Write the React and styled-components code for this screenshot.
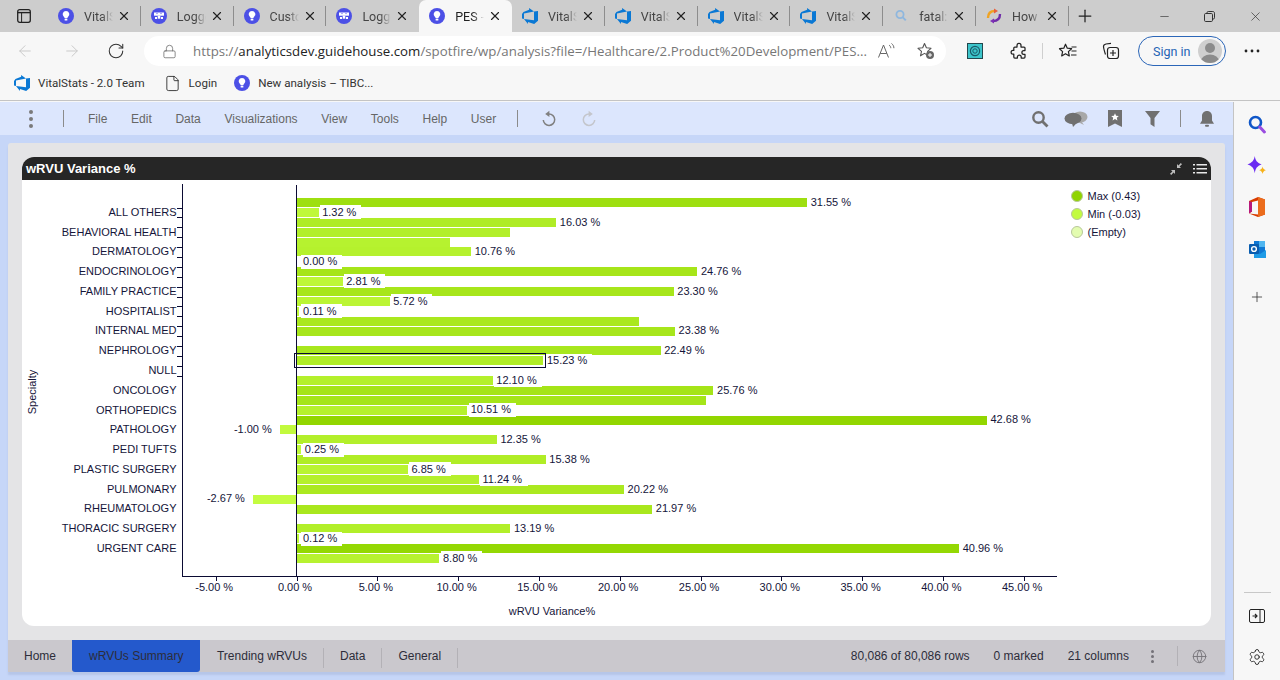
import React from "react";
import styled, { createGlobalStyle } from "styled-components";
import { ArrowLeft, ArrowRight, RotateCw, Lock, Plus, Minus, X, Settings, File as FileIcon, Globe } from "lucide-react";

const Global = createGlobalStyle`
  html, body { margin: 0; padding: 0; background: #f7f7f7; }
  #root { width: 1280px; height: 680px; overflow: hidden; }
`;

const UI = `Roboto, "Open Sans", sans-serif`;
const AR = `"Liberation Sans", Arial, sans-serif`;

const Page = styled.div`
  width: 1280px; height: 680px; display: flex; flex-direction: column; overflow: hidden;
  background: #f7f7f7; font-family: ${UI};
`;
const TabStrip = styled.div`
  height: 32px; flex: none; display: flex; align-items: stretch; background: #cdcdcd;
`;
const StripToggle = styled.div`
  width: 48px; flex: none; display: flex; align-items: center; padding-left: 17px; box-sizing: border-box;
`;
const Tab = styled.div`
  width: 92.8px; flex: none; box-sizing: border-box; position: relative;
  display: flex; align-items: center; padding-left: 10px;
  background: ${(p) => (p.$active ? "#f7f7f7" : "transparent")};
  border-radius: ${(p) => (p.$active ? "7px 7px 0 0" : "0")};
  &::after {
    content: ""; position: absolute; right: 0; top: 6px; height: 20px; width: 1px;
    background: ${(p) => (p.$active || p.$beforeActive ? "transparent" : "#8d8d8d")};
  }
`;
const TabTitle = styled.span`
  width: 29px; margin-left: 10px; overflow: hidden; white-space: nowrap; font-size: 12.5px; color: ${(p) => (p.$active ? "#222" : "#444")};
  -webkit-mask-image: linear-gradient(90deg, #000 62%, transparent 100%);
  mask-image: linear-gradient(90deg, #000 62%, transparent 100%);
`;
const TabClose = styled.span`
  display: flex; margin-left: 4px; color: #222;
`;
const NewTab = styled.div`
  width: 33px; flex: none; display: flex; align-items: center; justify-content: center; color: #222;
`;
const WindowControls = styled.div`
  margin-left: auto; display: flex; align-items: center; color: #333; padding-right: 2px;
`;
const WindowButton = styled.div`
  width: 45.5px; display: flex; justify-content: center;
`;

const AddressRow = styled.div`
  height: 34px; flex: none; display: flex; align-items: center; padding-top: 4px; box-sizing: border-box; position: relative;
`;
const NavSlot = styled.div`
  width: ${(p) => p.$w || 44}px; flex: none; display: flex; justify-content: center; color: ${(p) => (p.$dim ? "#c9c9c9" : "#333")};
`;
const AddressBar = styled.div`
  width: 802px; height: 30px; flex: none; margin-left: 6px; background: #fff; border-radius: 15px;
  display: flex; align-items: center; box-sizing: border-box; padding-left: 18px; color: #666;
`;
const Url = styled.div`
  margin-left: 16px; width: 676px; white-space: nowrap; overflow: hidden; font-family: "Open Sans", sans-serif; font-size: 13.25px; color: #777; letter-spacing: 0.02px;
  b { font-weight: 400; color: #222; }
`;
const BarIcon = styled.div`
  display: flex; flex: none; margin-left: ${(p) => p.$ml || 0}px;
`;
const Divider = styled.div`
  width: 1px; height: 16px; background: #cfcfcf; flex: none; margin-left: ${(p) => p.$ml || 0}px;
`;
const SignIn = styled.div`
  width: 88px; height: 30px; box-sizing: border-box; flex: none; margin-left: 18px; border: 1px solid #2b66b8; border-radius: 15px;
  display: flex; align-items: center; justify-content: space-between; padding: 0 3px 0 14px; font-size: 12.5px; color: #2463b4;
`;
const Avatar = styled.div`
  width: 24px; height: 24px; border-radius: 50%; background: #cfcfcf; overflow: hidden; display: flex;
`;
const BookmarkRow = styled.div`
  height: 35px; flex: none; display: flex; align-items: center; padding-left: 14px; box-sizing: border-box;
  border-bottom: 1px solid #c4c4c4; margin-bottom: 1px;
`;
const Bookmark = styled.div`
  display: flex; align-items: center; font-size: 11.6px; color: #333; margin-right: ${(p) => p.$mr}px; gap: 8px; white-space: nowrap;
`;

const Body = styled.div`
  flex: 1; min-height: 0; display: flex;
`;
const AppArea = styled.div`
  width: 1233px; flex: none; background: #c6d6f8; display: flex; flex-direction: column; font-family: ${AR}; border-right: 1px solid #c4c4c4;
`;
const Toolbar = styled.div`
  height: 33px; flex: none; background: #dce6fd; display: flex; align-items: center; box-sizing: border-box; padding-right: 18px;
`;
const MenuDots = styled.div`
  margin-left: 29px; display: flex; flex-direction: column; gap: 3px;
  i { width: 4px; height: 4px; border-radius: 50%; background: #7a7a7a; display: block; }
`;
const ToolSep = styled.div`
  width: 1px; height: ${(p) => p.$h || 17}px; background: #8b8b8b; flex: none; margin-left: ${(p) => p.$ml || 0}px;
`;
const MenuList = styled.div`
  display: flex; gap: 23.7px; margin-left: 24px; font-size: 12px; color: #666;
`;
const ToolIcon = styled.div`
  flex: none; display: flex; margin-left: ${(p) => p.$ml || 0}px;
`;
const Panel = styled.div`
  margin: 8px 0 0 8px; width: 1217px; height: 529px; flex: none; background: #e4e4e6; border-radius: 3px 3px 0 0;
  display: flex; flex-direction: column; box-shadow: 0 3px 2px #b6c6e8;
`;
const ChartCard = styled.div`
  margin: 14px; height: 469px; flex: none; display: flex; flex-direction: column; background: #fff; border-radius: 12px;
  overflow: hidden;
`;
const ChartHeader = styled.div`
  height: 23px; flex: none; background: #262626; color: #fff; display: flex; align-items: center; padding: 0 4px;
  font-size: 13px; font-weight: 700;
`;
const HeadIcons = styled.div`
  margin-left: auto; display: flex; align-items: center; gap: 11px;
`;
const ChartBody = styled.div`
  flex: 1; display: flex;
`;
const Plot = styled.svg`
  width: 1040px; height: 446px; flex: none; display: block; font-family: ${AR};
`;
const CatLabel = styled.text`
  font-size: 11px; fill: #15153a; text-anchor: end; dominant-baseline: central;
`;
const ValueLabel = styled.text`
  font-size: 11px; fill: #15153a; dominant-baseline: central; text-anchor: ${(p) => p.$anchor || "start"};
`;
const AxisLabel = styled.text`
  font-size: 11px; fill: #15153a; text-anchor: middle; dominant-baseline: central;
`;
const AxisLine = styled.line`
  stroke: #0b0b33; stroke-width: 1; shape-rendering: crispEdges;
`;
const LabelBox = styled.rect`
  fill: #fff;
`;
const MarkRect = styled.rect`
  fill: none; stroke: #0b0b33; stroke-width: 1; shape-rendering: crispEdges;
`;
const Legend = styled.div`
  margin-left: 9px; padding-top: 7px; display: flex; flex-direction: column;
`;
const LegendItem = styled.div`
  height: 18px; display: flex; align-items: center; gap: 4.5px; font-size: 11px; color: #15153a;
`;
const LegendDot = styled.span`
  width: 10px; height: 10px; border-radius: 50%; background: ${(p) => p.$c}; border: 0.5px solid #b8c79a; flex: none;
`;
const StatusBar = styled.div`
  height: 32px; flex: none; background: #cac8cd; display: flex; align-items: stretch; font-size: 12px; color: #2d2d3a;
`;
const SheetTab = styled.div`
  padding: 0 ${(p) => p.$pad || 16.5}px; display: flex; align-items: center; position: relative;
  background: ${(p) => (p.$active ? "#2459cc" : "transparent")};
  border-radius: ${(p) => (p.$active ? "0 0 3px 3px" : "0")};
  &::after {
    content: ""; position: absolute; right: 0; top: 8px; height: 20px; width: 1px;
    background: ${(p) => (p.$sep ? "#b3b1b6" : "transparent")};
  }
`;
const StatusRight = styled.div`
  margin-left: auto; display: flex; align-items: center; padding-right: 18px;
`;
const StatusText = styled.span`
  margin-right: ${(p) => p.$mr || 24}px; white-space: nowrap;
`;
const StatusDots = styled(MenuDots)`
  margin-left: 0; gap: 2px;
  i { width: 3px; height: 3px; background: #747278; }
`;
const StatusSep = styled.div`
  width: 1px; height: 20px; background: #b3b1b6; margin: 0 14px 0 23px;
`;

const Sidebar = styled.div`
  flex: 1; background: #f7f7f7; display: flex; flex-direction: column; align-items: center; padding-top: 12px; box-sizing: border-box;
`;
const SideIcon = styled.div`
  height: 20px; display: flex; align-items: center; justify-content: center; margin-bottom: ${(p) => p.$mb || 22}px;
`;
const SideRule = styled.div`
  width: 27px; height: 1px; background: #c8c8c8; margin-top: auto; margin-bottom: 13px;
`;

/* ---- icons ---- */
const Bulb = ({ s = 16 }) => (
  <svg width={s} height={s} viewBox="0 0 16 16" style={{ flex: "none" }}>
    <circle cx="8" cy="8" r="8" fill="#4c50e6" />
    <path d="M8 3a3.4 3.4 0 0 0-2 6.1c.4.3.6.7.6 1.1h2.8c0-.4.2-.8.6-1.1A3.4 3.4 0 0 0 8 3z" fill="#fff" />
    <rect x="6.6" y="10.8" width="2.8" height="1.7" rx=".6" fill="#fff" />
  </svg>
);
const Logger = () => (
  <svg width="16" height="16" viewBox="0 0 16 16" style={{ flex: "none" }}>
    <circle cx="8" cy="8" r="8" fill="#4c50e6" />
    <rect x="3" y="4.5" width="10" height="3.2" fill="#fff" />
    <path d="M5.5 5.6h1M9.5 5.6h1" stroke="#4c50e6" strokeWidth="1" />
    <rect x="6.7" y="7.7" width="2.6" height="3" fill="#fff" />
    <rect x="4" y="9" width="2" height="2" fill="#fff" />
    <rect x="10" y="9" width="2" height="2" fill="#fff" />
  </svg>
);
const Azure = ({ s = 16 }) => (
  <svg width={s} height={s} viewBox="0 0 24 24" style={{ flex: "none" }}>
    <path fill="#0a78d4" d="M0 8.877L2.247 5.91l8.405-3.416V.022l7.37 5.393L2.966 8.338v8.225L0 15.707zm24-4.45v14.651l-5.753 4.9-9.303-3.057v3.056l-5.978-7.416 15.057 1.798V5.415z" />
  </svg>
);
const SearchFav = () => (
  <svg width="16" height="16" viewBox="0 0 16 16" style={{ flex: "none" }}>
    <circle cx="7" cy="6.5" r="3.6" fill="none" stroke="#8fb7de" strokeWidth="1.8" />
    <path d="M9.8 9.4l3 3" stroke="#8fb7de" strokeWidth="2" />
  </svg>
);
const Swirl = () => (
  <svg width="16" height="16" viewBox="0 0 16 16" style={{ flex: "none" }}>
    <path d="M2 10 C2 5 5 3 9 3" fill="none" stroke="#f0a323" strokeWidth="2.4" />
    <path d="M8 .5l4 2.6-4 2.4z" fill="#e9603a" />
    <path d="M14 6c0 5-3 7-7 7" fill="none" stroke="#6f2da8" strokeWidth="2.4" />
    <path d="M8 15.5l-4-2.6 4-2.4z" fill="#7d2fb5" />
  </svg>
);
const SidebarToggle = () => (
  <svg width="14" height="14" viewBox="0 0 14 14">
    <rect x=".7" y=".7" width="12.6" height="12.6" rx="2" fill="none" stroke="#222" strokeWidth="1.3" />
    <path d="M.7 3.6h12.6" stroke="#222" strokeWidth="1.4" />
    <path d="M4.6 3.6V13" stroke="#222" strokeWidth="1" />
  </svg>
);
const ReadAloud = () => (
  <svg width="20" height="18" viewBox="0 0 20 18" fill="none" stroke="#666" strokeWidth="1">
    <path d="M1.5 15.5L6.5 3l5 12.5M3.2 11.5h6.6" />
    <path d="M12 3c1.2.8 1.8 2 1.8 3.2M14.5 1.5c1.6 1.2 2.4 2.8 2.4 4.7" />
  </svg>
);
const StarAdd = () => (
  <svg width="20" height="20" viewBox="0 0 20 20">
    <path d="M8.5 2.5l1.9 4.3 4.6.5-3.4 3 1 4.5-4.1-2.4-4 2.4 1-4.5-3.5-3 4.7-.5z" fill="none" stroke="#555" strokeWidth="1.1" strokeLinejoin="round" />
    <circle cx="14" cy="14" r="4" fill="#666" />
    <path d="M14 12v4M12 14h4" stroke="#fff" strokeWidth="1" />
  </svg>
);
const ExtIcon = () => (
  <svg width="16" height="16" viewBox="0 0 16 16">
    <rect x=".5" y=".5" width="15" height="15" fill="#3cc5cb" stroke="#23474d" />
    <circle cx="8" cy="8" r="4.6" fill="none" stroke="#1b5a68" strokeWidth="1.2" />
    <circle cx="8" cy="8" r="2.2" fill="none" stroke="#1b5a68" strokeWidth="1" />
  </svg>
);
const PuzzleIcon = () => (
  <svg width="18" height="18" viewBox="0 0 18 18" fill="none" stroke="#222" strokeWidth="1.25" strokeLinejoin="round">
    <path d="M7 3.4a2 2 0 0 1 4 0V5h3a1 1 0 0 1 1 1v2.6h-1.2a1.9 1.9 0 0 0 0 3.8H15V15a1 1 0 0 1-1 1h-2.8v-1a1.9 1.9 0 0 0-3.8 0v1H4.8a1 1 0 0 1-1-1v-2.8H3a1.9 1.9 0 0 1 0-3.8h.8V6a1 1 0 0 1 1-1H7z" />
  </svg>
);
const Favorites = () => (
  <svg width="20" height="18" viewBox="0 0 20 18" fill="none" stroke="#222" strokeWidth="1.2" strokeLinejoin="round">
    <path d="M7.5 2.2l1.8 4 4.3.5-3.2 2.9.9 4.3-3.8-2.2-3.8 2.2.9-4.3L1.5 6.7l4.3-.5z" />
    <path d="M13.5 5h5M13.5 9h5M13 13h5.5" />
  </svg>
);
const Collections = () => (
  <svg width="18" height="18" viewBox="0 0 18 18" fill="none" stroke="#222" strokeWidth="1.2">
    <path d="M3.5 12.5C2 8 1.6 6 1.5 4.5 1.5 3 2.5 2.3 4 2l5-.6" />
    <rect x="5.5" y="5.5" width="11" height="11" rx="2.5" />
    <path d="M11 8v6M8 11h6" />
  </svg>
);
const Dots3 = () => (
  <svg width="16" height="4" viewBox="0 0 16 4"><circle cx="2" cy="2" r="1.4" fill="#222" /><circle cx="8" cy="2" r="1.4" fill="#222" /><circle cx="14" cy="2" r="1.4" fill="#222" /></svg>
);
const Person = () => (
  <svg width="24" height="24" viewBox="0 0 24 24"><circle cx="12" cy="9" r="5" fill="#8b8b8b" /><ellipse cx="12" cy="22" rx="9" ry="6.5" fill="#8b8b8b" /></svg>
);
const ToolSearch = () => (
  <svg width="18" height="18" viewBox="0 0 18 18" fill="none" stroke="#707070">
    <circle cx="7.5" cy="7.5" r="5.2" strokeWidth="2.4" /><path d="M11.5 11.5l5 5" strokeWidth="2.8" />
  </svg>
);
const ToolComments = () => (
  <svg width="24" height="16" viewBox="0 0 24 16">
    <ellipse cx="16" cy="6" rx="7.5" ry="5.5" fill="#a8a8a8" />
    <path d="M17 10l3 4-6-3z" fill="#a8a8a8" />
    <ellipse cx="9" cy="7.5" rx="8.5" ry="5.7" fill="#707070" />
    <path d="M8 12l1 4 4-4.3z" fill="#707070" />
  </svg>
);
const ToolBookmark = () => (
  <svg width="14" height="17" viewBox="0 0 14 17">
    <path d="M0 0h14v17l-7-3.6L0 17z" fill="#707070" />
    <path d="M7 3.2l1.1 2.5 2.7.3-2 1.8.6 2.7L7 9.1l-2.4 1.4.6-2.7-2-1.8 2.7-.3z" fill="#fff" />
  </svg>
);
const ToolFilter = () => (
  <svg width="15" height="16" viewBox="0 0 15 16"><path d="M0 0h15L9.5 7v9l-4-2.8V7z" fill="#707070" /></svg>
);
const ToolBell = () => (
  <svg width="14" height="16" viewBox="0 0 14 16"><path d="M7 0c3 0 5 2.2 5 5.2v4.3l2 3.3H0l2-3.3V5.2C2 2.2 4 0 7 0z" fill="#707070" /><rect x="5" y="13.8" width="4" height="2" rx="1" fill="#707070" /></svg>
);
const CircleArrow = ({ c, flip }) => (
  <svg width="14" height="17" viewBox="0 0 14 17" fill="none" stroke={c} strokeWidth="1.5" style={flip ? { transform: "scaleX(-1)" } : undefined}>
    <path d="M7 4a5.7 5.7 0 1 1-5.7 6" />
    <path d="M7.4 0.8v6.2L3.2 4z" fill={c} stroke="none" />
  </svg>
);
const Collapse = () => (
  <svg width="12" height="12" viewBox="0 0 12 12" fill="#bdbdbd">
    <path d="M7 5h4L9.6 3.6 12 1.2 10.8 0 8.4 2.4 7 1z" /><path d="M5 7H1l1.4 1.4L0 10.8 1.2 12l2.4-2.4L5 11z" />
  </svg>
);
const ListIcon = () => (
  <svg width="14" height="10" viewBox="0 0 14 10" fill="#e8e8e8">
    <rect y="0" width="2" height="1.5" /><rect x="3.5" y="0" width="10.5" height="1.5" />
    <rect y="4" width="2" height="1.5" /><rect x="3.5" y="4" width="10.5" height="1.5" />
    <rect y="8" width="2" height="1.5" /><rect x="3.5" y="8" width="10.5" height="1.5" />
  </svg>
);
const SideSearch = () => (
  <svg width="18" height="19" viewBox="0 0 18 19" fill="none">
    <circle cx="7.5" cy="7.5" r="5.5" stroke="#0f56c8" strokeWidth="2.6" />
    <path d="M11.8 12l4.6 5" stroke="#9a4de0" strokeWidth="3" strokeLinecap="round" />
  </svg>
);
const SideSpark = () => (
  <svg width="20" height="20" viewBox="0 0 18 18">
    <path d="M7 0c.6 4 1.8 5.8 6.2 7.6C9 9 7.6 11 7 15.6 6.3 11 4.8 9 .4 7.6 4.8 5.8 6.3 4 7 0z" fill="#6a2bf2" />
    <path d="M14 9.5c.3 1.8 1 2.6 3 3.3-2 .7-2.7 1.5-3 3.4-.3-1.9-1-2.7-3-3.4 2-.7 2.7-1.5 3-3.3z" fill="#f7b21a" />
  </svg>
);
const SideOffice = () => (
  <svg width="16" height="20" viewBox="0 0 16 20">
    <path d="M0 4l9-4 7 2.4v15L9 20 0 16.4 9 17.6V3.4L3 5v9.5L0 16.4z" fill="#d83b01" />
    <path d="M9 0l7 2.4v15L9 20z" fill="#eb6c1c" />
    <path d="M0 4.2L3 5v9.5L0 16.4z" fill="#b7187c" />
  </svg>
);
const SideOutlook = () => (
  <svg width="17" height="17" viewBox="0 0 17 17">
    <rect x="5" y="0" width="11" height="16" fill="#0f78d4" />
    <rect x="10" y="0" width="6" height="6" fill="#50b6f0" />
    <path d="M5 10l6 3 6-4v8H5z" fill="#1f9be6" />
    <rect x="0" y="3" width="10" height="10" rx="1" fill="#0a5eb0" />
    <circle cx="5" cy="8" r="2.4" fill="none" stroke="#fff" strokeWidth="1.4" />
  </svg>
);
const SidePanel = () => (
  <svg width="16" height="14" viewBox="0 0 16 14" fill="none" stroke="#222" strokeWidth="1">
    <rect x=".5" y=".5" width="15" height="13" rx="1.5" /><path d="M11 .5v13" />
    <path d="M3.5 7h4M6 5l2 2-2 2" strokeWidth="1.2" />
  </svg>
);

/* ---- chart data ---- */
const CATS = ["ALL OTHERS","BEHAVIORAL HEALTH","DERMATOLOGY","ENDOCRINOLOGY","FAMILY PRACTICE","HOSPITALIST","INTERNAL MED","NEPHROLOGY","NULL","ONCOLOGY","ORTHOPEDICS","PATHOLOGY","PEDI TUFTS","PLASTIC SURGERY","PULMONARY","RHEUMATOLOGY","THORACIC SURGERY","URGENT CARE"];
// [value, labelled]; null = no bar in this slot
const ROWS = [
  [31.55,1],[1.32,1],[16.03,1],[13.15,0],[9.45,0],[10.76,1],[0,1],[24.76,1],[2.81,1],[23.3,1],
  [5.72,1],[0.11,1],[21.15,0],[23.38,1],null,[22.49,1],[15.23,1],null,[12.1,1],[25.76,1],
  [25.3,0],[10.51,1],[42.68,1],[-1,1],[12.35,1],[0.25,1],[15.38,1],[6.85,1],[11.24,1],[20.22,1],
  [-2.67,1],[21.97,1],null,[13.19,1],[0.12,1],[40.96,1],[8.8,1],
];
const X0 = 296.5, K = 16.16, Y0 = 198, P = 9.889, BH = 9;
const sx = (v) => X0 + v * K;
const ry = (i) => Y0 + i * P;
const lerp = (a, b, t) => Math.round(a + (b - a) * t);
const colour = (v) => {
  const t = (v + 3) / 46;
  return `rgb(${lerp(196, 146, t)},${lerp(252, 214, t)},${lerp(64, 0, t)})`;
};
const fmt = (v) => `${v.toFixed(2)} %`;
const textW = (s) => 6.12 * (s.length - 3) + 15.9;
const TICKS = [-5, 0, 5, 10, 15, 20, 25, 30, 35, 40, 45];

function Chart() {
  const labels = ROWS.map((r, i) => {
    if (!r || !r[1]) return null;
    const [v] = r;
    const s = fmt(v);
    const cy = ry(i) + BH / 2 - 0.7;
    if (v < 0) return { s, cy, x: sx(v) - 8.5, neg: true };
    return { s, cy, x: Math.max(303, sx(v) + 4.3) };
  }).filter(Boolean);
  return (
    <Plot viewBox="22 180 1040 446">
      {ROWS.map((r, i) => {
        if (!r) return null;
        const x = r[0] < 0 ? sx(r[0]) : X0;
        return <rect key={i} x={x} y={ry(i)} width={Math.abs(r[0]) * K + (r[0] < 0 ? 0 : 0.7)} height={BH} fill={colour(r[0])} shapeRendering="crispEdges" />;
      })}
      {labels.filter((l) => !l.neg).map((l) => (
        <LabelBox key={l.s} x={l.x - 2} y={l.cy - 6.5} width={textW(l.s) + 7} height={14} shapeRendering="crispEdges" />
      ))}
      {labels.map((l) => (
        <ValueLabel key={l.s} x={l.x} y={l.cy} $anchor={l.neg ? "end" : "start"}>{l.s}</ValueLabel>
      ))}
      <MarkRect x="294.5" y="353.5" width="251" height="14" />
      <AxisLine x1="182.5" y1="184" x2="182.5" y2="576" />
      <AxisLine x1="296.5" y1="185" x2="296.5" y2="576" />
      <AxisLine x1="182" y1="576.5" x2="1057" y2="576.5" />
      {Array.from({ length: 18 }, (_, i) => (
        <AxisLine key={i} x1="177" x2="182" y1={Math.round(207.5 + i * 9.89) + 0.5} y2={Math.round(207.5 + i * 9.89) + 0.5} />
      ))}
      {CATS.map((c, i) => (
        <CatLabel key={c} x="176.5" y={211.9 + i * 19.76}>{c}</CatLabel>
      ))}
      {TICKS.map((t) => (
        <g key={t}>
          <AxisLine x1={Math.round(sx(t)) + 0.5} x2={Math.round(sx(t)) + 0.5} y1="576" y2="581" />
          <AxisLabel x={sx(t) - 1.5} y="586.8">{fmt(t)}</AxisLabel>
        </g>
      ))}
      <AxisLabel x="552" y="611">wRVU Variance%</AxisLabel>
      <AxisLabel transform="translate(32 392) rotate(-90)">Specialty</AxisLabel>
    </Plot>
  );
}

const TABS = [
  { icon: <Bulb />, title: "VitalStats" },
  { icon: <Logger />, title: "Logger" },
  { icon: <Bulb />, title: "Custom" },
  { icon: <Logger />, title: "Logger" },
  { icon: <Bulb />, title: "PES - W", active: true },
  { icon: <Azure />, title: "VitalStats" },
  { icon: <Azure />, title: "VitalStats" },
  { icon: <Azure />, title: "VitalStats" },
  { icon: <Azure />, title: "VitalStats" },
  { icon: <SearchFav />, title: "fatal: n" },
  { icon: <Swirl />, title: "How to" },
];

export default function App() {
  return (
    <Page>
      <Global />
      <TabStrip>
        <StripToggle><SidebarToggle /></StripToggle>
        {TABS.map((t, i) => (
          <Tab key={i} $active={t.active} $beforeActive={TABS[i + 1] && TABS[i + 1].active}>
            {t.icon}
            <TabTitle $active={t.active}>{t.title}</TabTitle>
            <TabClose><X size={14} strokeWidth={2} /></TabClose>
          </Tab>
        ))}
        <NewTab><Plus size={20} strokeWidth={1.5} /></NewTab>
        <WindowControls>
          <WindowButton><Minus size={13} strokeWidth={1.2} /></WindowButton>
          <WindowButton>
            <svg width="11" height="11" viewBox="0 0 11 11" fill="none" stroke="#333"><rect x=".5" y="2.5" width="8" height="8" rx="1.2" /><path d="M3 2.5V1.7C3 1 3.5.5 4.2.5h4.6c1 0 1.7.7 1.7 1.7v4.6c0 .7-.5 1.2-1.2 1.2H8.5" /></svg>
          </WindowButton>
          <WindowButton><X size={15} strokeWidth={1.1} /></WindowButton>
        </WindowControls>
      </TabStrip>
      <AddressRow>
        <NavSlot $w={50} $dim><ArrowLeft size={18} strokeWidth={1.3} /></NavSlot>
        <NavSlot $w={44} $dim><ArrowRight size={18} strokeWidth={1.3} /></NavSlot>
        <NavSlot $w={44}><RotateCw size={18} strokeWidth={1.4} /></NavSlot>
        <AddressBar>
          <Lock size={15} strokeWidth={1.2} />
          <Url>https://<b>analyticsdev.guidehouse.com</b>/spotfire/wp/analysis?file=/Healthcare/2.Product%20Development/PES...</Url>
          <BarIcon $ml={8}><ReadAloud /></BarIcon>
          <BarIcon $ml={19}><StarAdd /></BarIcon>
        </AddressBar>
        <BarIcon $ml={21}><ExtIcon /></BarIcon>
        <BarIcon $ml={27}><PuzzleIcon /></BarIcon>
        <Divider $ml={14} />
        <BarIcon $ml={15}><Favorites /></BarIcon>
        <BarIcon $ml={24}><Collections /></BarIcon>
        <SignIn>Sign in<Avatar><Person /></Avatar></SignIn>
        <BarIcon $ml={18}><Dots3 /></BarIcon>
      </AddressRow>
      <BookmarkRow>
        <Bookmark $mr={19}><Azure />VitalStats - 2.0 Team</Bookmark>
        <Bookmark $mr={17}><FileIcon size={17} strokeWidth={1.2} color="#222" />Login</Bookmark>
        <Bookmark $mr={0}><Bulb />New analysis – TIBC...</Bookmark>
      </BookmarkRow>
      <Body>
        <AppArea>
          <Toolbar>
            <MenuDots><i /><i /><i /></MenuDots>
            <ToolSep $ml={30} />
            <MenuList>
              {["File", "Edit", "Data", "Visualizations", "View", "Tools", "Help", "User"].map((m) => <span key={m}>{m}</span>)}
            </MenuList>
            <ToolSep $ml={21} />
            <ToolIcon $ml={24}><CircleArrow c="#808080" /></ToolIcon>
            <ToolIcon $ml={26}><CircleArrow c="#c4c6cc" flip /></ToolIcon>
            <ToolIcon $ml={435}><ToolSearch /></ToolIcon>
            <ToolIcon $ml={15}><ToolComments /></ToolIcon>
            <ToolIcon $ml={20}><ToolBookmark /></ToolIcon>
            <ToolIcon $ml={23}><ToolFilter /></ToolIcon>
            <ToolSep $ml={20} />
            <ToolIcon $ml={19}><ToolBell /></ToolIcon>
          </Toolbar>
          <Panel>
            <ChartCard>
              <ChartHeader>
                wRVU Variance %
                <HeadIcons><Collapse /><ListIcon /></HeadIcons>
              </ChartHeader>
              <ChartBody>
                <Chart />
                <Legend>
                  <LegendItem><LegendDot $c="#90d400" />Max (0.43)</LegendItem>
                  <LegendItem><LegendDot $c="#c2fb40" />Min (-0.03)</LegendItem>
                  <LegendItem><LegendDot $c="#e3fcb0" />(Empty)</LegendItem>
                </Legend>
              </ChartBody>
            </ChartCard>
            <StatusBar>
              <SheetTab $pad={16}>Home</SheetTab>
              <SheetTab $active $pad={17}>wRVUs Summary</SheetTab>
              <SheetTab $sep>Trending wRVUs</SheetTab>
              <SheetTab $sep>Data</SheetTab>
              <SheetTab $sep>General</SheetTab>
              <StatusRight>
                <StatusText>80,086 of 80,086 rows</StatusText>
                <StatusText>0 marked</StatusText>
                <StatusText $mr={22}>21 columns</StatusText>
                <StatusDots><i /><i /><i /></StatusDots>
                <StatusSep />
                <Globe size={15} strokeWidth={1.5} color="#77757b" />
              </StatusRight>
            </StatusBar>
          </Panel>
        </AppArea>
        <Sidebar>
          <SideIcon><SideSearch /></SideIcon>
          <SideIcon $mb={21}><SideSpark /></SideIcon>
          <SideIcon><SideOffice /></SideIcon>
          <SideIcon $mb={28}><SideOutlook /></SideIcon>
          <SideIcon><Plus size={16} strokeWidth={1.2} color="#333" /></SideIcon>
          <SideRule />
          <SideIcon $mb={21}><SidePanel /></SideIcon>
          <SideIcon $mb={13}><Settings size={18} strokeWidth={1.2} color="#222" /></SideIcon>
        </Sidebar>
      </Body>
    </Page>
  );
}
